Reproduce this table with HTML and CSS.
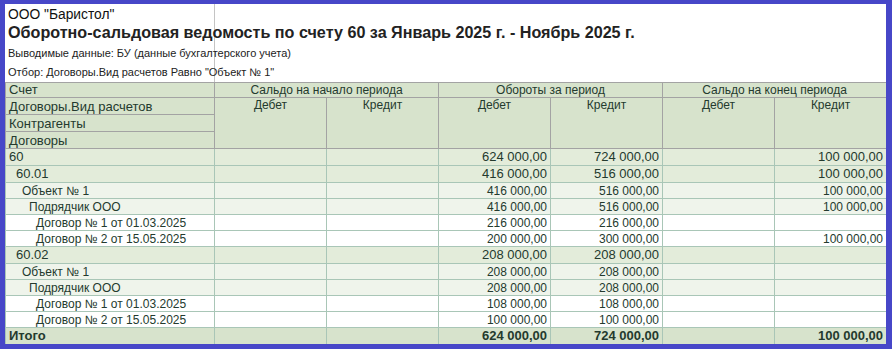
FILE: index.html
```html
<!DOCTYPE html>
<html lang="ru">
<head>
<meta charset="utf-8">
<link rel="stylesheet" href="styles.css">
</head>
<body>
<div class="frame">
  <div class="report-head">
    <div class="org">ООО "Баристол"</div>
    <div class="title">Оборотно-сальдовая ведомость по счету 60 за Январь 2025 г. - Ноябрь 2025 г.</div>
    <div class="meta m1">Выводимые данные: БУ (данные бухгалтерского учета)</div>
    <div class="meta m2">Отбор: Договоры.Вид расчетов Равно "Объект № 1"</div>
  </div>
  <table class="grid">
    <colgroup>
      <col class="c-name"><col class="c-num"><col class="c-num"><col class="c-num"><col class="c-num"><col class="c-num"><col class="c-num">
    </colgroup>
    <thead>
      <tr class="h1">
        <th class="hn">Счет</th>
        <th colspan="2" class="hg">Сальдо на начало периода</th>
        <th colspan="2" class="hg">Обороты за период</th>
        <th colspan="2" class="hg">Сальдо на конец периода</th>
      </tr>
      <tr class="h2">
        <th class="hn">Договоры.Вид расчетов</th>
        <th rowspan="3" class="hs">Дебет</th>
        <th rowspan="3" class="hs">Кредит</th>
        <th rowspan="3" class="hs">Дебет</th>
        <th rowspan="3" class="hs">Кредит</th>
        <th rowspan="3" class="hs">Дебет</th>
        <th rowspan="3" class="hs">Кредит</th>
      </tr>
      <tr class="h2"><th class="hn">Контрагенты</th></tr>
      <tr class="h2"><th class="hn">Договоры</th></tr>
    </thead>
    <tbody>
      <tr class="l0"><td class="nm">60</td><td></td><td></td><td>624 000,00</td><td>724 000,00</td><td></td><td>100 000,00</td></tr>
      <tr class="l1"><td class="nm">60.01</td><td></td><td></td><td>416 000,00</td><td>516 000,00</td><td></td><td>100 000,00</td></tr>
      <tr class="l2"><td class="nm">Объект № 1</td><td></td><td></td><td>416 000,00</td><td>516 000,00</td><td></td><td>100 000,00</td></tr>
      <tr class="l3"><td class="nm">Подрядчик ООО</td><td></td><td></td><td>416 000,00</td><td>516 000,00</td><td></td><td>100 000,00</td></tr>
      <tr class="l4"><td class="nm">Договор № 1 от 01.03.2025</td><td></td><td></td><td>216 000,00</td><td>216 000,00</td><td></td><td></td></tr>
      <tr class="l4"><td class="nm">Договор № 2 от 15.05.2025</td><td></td><td></td><td>200 000,00</td><td>300 000,00</td><td></td><td>100 000,00</td></tr>
      <tr class="l1"><td class="nm">60.02</td><td></td><td></td><td>208 000,00</td><td>208 000,00</td><td></td><td></td></tr>
      <tr class="l2"><td class="nm">Объект № 1</td><td></td><td></td><td>208 000,00</td><td>208 000,00</td><td></td><td></td></tr>
      <tr class="l3"><td class="nm">Подрядчик ООО</td><td></td><td></td><td>208 000,00</td><td>208 000,00</td><td></td><td></td></tr>
      <tr class="l4"><td class="nm">Договор № 1 от 01.03.2025</td><td></td><td></td><td>108 000,00</td><td>108 000,00</td><td></td><td></td></tr>
      <tr class="l4"><td class="nm">Договор № 2 от 15.05.2025</td><td></td><td></td><td>100 000,00</td><td>100 000,00</td><td></td><td></td></tr>
      <tr class="tot"><td class="nm">Итого</td><td></td><td></td><td>624 000,00</td><td>724 000,00</td><td></td><td>100 000,00</td></tr>
    </tbody>
  </table>
</div>
</body>
</html>
```
FILE: styles.css
```css
* { box-sizing: border-box; }
html, body { margin: 0; padding: 0; background: #fff; }
body {
  font-family: "Liberation Sans", Arial, sans-serif;
  color: #243a2e;
}
.frame {
  width: 892px;
  height: 349px;
  border-style: solid;
  border-color: #4747c8;
  border-width: 4px 6px 5px 5px;
  overflow: hidden;
  background: #fff;
}
.report-head {
  height: 78px;
  padding-left: 3px;
  background: linear-gradient(#c4c4c4, #c4c4c4) no-repeat 209px 0 / 1px 100%;
  color: #1e1e1e;
}
.org { font-size: 13.8px; line-height: 15px; padding-top: 3px; color: #111; }
.title { font-size: 16.15px; font-weight: bold; line-height: 19px; padding-top: 1px; color: #222; }
.meta { font-size: 11px; line-height: 13px; color: #222; }
.m1 { padding-top: 5px; }
.m2 { padding-top: 6px; }

.grid {
  border-collapse: collapse;
  table-layout: fixed;
  width: 881px;
}
.c-name { width: 209px; }
.c-num { width: 112px; }

.grid th, .grid td {
  padding: 0 3px;
  white-space: nowrap;
  overflow: hidden;
  vertical-align: middle;
}
.grid thead th {
  background: #d7e3cc;
  border: 1px solid #a3a3a3;
  font-weight: normal;
}
.hn { text-align: left; font-size: 13px; padding-left: 3px; }
.h1 th { height: 15px; line-height: 14px; }
.h2 th { height: 17px; line-height: 15px; }
.hg { text-align: center; font-size: 12px; }
.hs { text-align: center; vertical-align: top !important; font-size: 12px; line-height: 15px; }

.grid tbody td {
  border: 1px solid #a9c6b7;
  text-align: right;
  font-size: 12px;
  line-height: 14px;
}
.grid tbody td.nm { text-align: left; }
.l0 td { background: #e3ecda; height: 17px; font-size: 13px !important; }
.l1 td { background: #e3ecda; height: 17px; font-size: 13px !important; }
.l2 td { background: #eff4eb; height: 16px; }
.l3 td { background: #eff4eb; height: 16px; }
.l4 td { background: #fff; height: 16px; }
.l0 td.nm { padding-left: 3px; }
.l1 td.nm { padding-left: 10px; }
.l2 td.nm { padding-left: 16px; }
.l3 td.nm { padding-left: 23px; }
.l4 td.nm { padding-left: 30px; }
.tot td {
  background: #d7e3cc;
  height: 17px;
  font-weight: bold;
  font-size: 13px !important;
  border-top: 1px solid #a3a3a3 !important;
  border-bottom: 1px solid #a3a3a3 !important;
}
```
